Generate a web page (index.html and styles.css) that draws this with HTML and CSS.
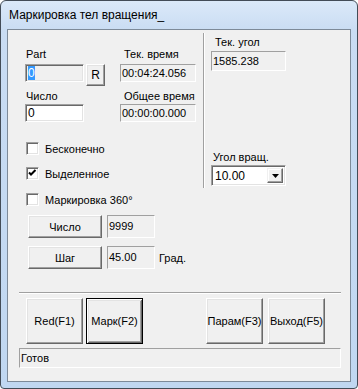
FILE: index.html
```html
<!DOCTYPE html>
<html lang="ru">
<head>
<meta charset="utf-8">
<title>Маркировка тел вращения</title>
<link rel="stylesheet" href="styles.css">
</head>
<body>
<div class="window">
  <div class="titlebar">Маркировка тел вращения_</div>
  <div class="client">
    <div class="top">
      <div class="left">
        <div class="row labels1">
          <span class="lbl col1 pl1">Part</span>
          <span class="lbl pl4">Тек. время</span>
        </div>
        <div class="row fields1">
          <div class="edit sunken readonly part"><span class="sel">0</span></div>
          <div class="btn rbtn">R</div>
          <div class="edit static time">00:04:24.056</div>
        </div>
        <div class="row labels2">
          <span class="lbl col1 pl1">Число</span>
          <span class="lbl pl4">Общее время</span>
        </div>
        <div class="row fields2">
          <div class="edit sunken part">0</div>
          <div class="edit static time time2">00:00:00.000</div>
        </div>
        <div class="cb cb1"><span class="box"></span><span class="cbtext">Бесконечно</span></div>
        <div class="cb cb2"><span class="box"><svg width="9" height="9" viewBox="0 0 9 9"><polyline points="1,3.5 3,5.5 7.5,1" fill="none" stroke="#000" stroke-width="2"/></svg></span><span class="cbtext">Выделенное</span></div>
        <div class="cb cb3"><span class="box"></span><span class="cbtext">Маркировка 360°</span></div>
        <div class="row brow brow1">
          <div class="btn wide">Число</div>
          <div class="edit static num">9999</div>
        </div>
        <div class="row brow brow2">
          <div class="btn wide">Шаг</div>
          <div class="edit static num">45.00</div>
          <span class="unit">Град.</span>
        </div>
      </div>
      <div class="vsep"></div>
      <div class="right">
        <span class="lbl rl1">Тек. угол</span>
        <div class="edit static angle">1585.238</div>
        <span class="lbl rl2">Угол вращ.</span>
        <div class="combo sunken">
          <span class="combotext">10.00</span>
          <span class="dd"><svg width="7" height="4" viewBox="0 0 7 4"><polygon points="0,0 7,0 3.5,4" fill="#000"/></svg></span>
        </div>
      </div>
    </div>
    <div class="hsep"></div>
    <div class="buttons">
      <div class="btn big">Red(F1)</div>
      <div class="btn big default m3">Марк(F2)</div>
      <div class="btn big m63">Парам(F3)</div>
      <div class="btn big m5">Выход(F5)</div>
    </div>
    <div class="status">Готов</div>
  </div>
</div>
</body>
</html>
```
FILE: styles.css
```css
* { box-sizing: border-box; }
html, body { margin: 0; padding: 0; }
body {
  width: 358px; height: 389px; overflow: hidden; background: #fff;
  font-family: "Liberation Sans", Arial, sans-serif; font-size: 11px; color: #000;
}
.window {
  width: 358px; height: 389px;
  border: 1px solid #434c57;
  border-radius: 6px 6px 4px 4px;
  background: linear-gradient(#dbe9f9, #c9dcf3 30px, #c0d7f1);
  display: flex; flex-direction: column; overflow: hidden;
}
.titlebar {
  height: 28px; flex: none; padding-left: 8px;
  font-size: 12px; line-height: 29px; white-space: nowrap;
}
.client {
  flex: none; margin: 0 6px; width: 344px; height: 353px;
  border: 1px solid #7d8a99; background: #f0f0f0;
}
.top { display: flex; align-items: flex-start; }
.left { width: 195px; padding-left: 17px; flex: none; }
.vsep {
  width: 2px; height: 155px; margin-top: 3px; flex: none;
  border-left: 1px solid #a0a0a0; border-right: 1px solid #fff;
}
.right { padding-left: 6px; display: flex; flex-direction: column; align-items: flex-start; }

.row { display: flex; align-items: flex-start; }
.lbl { display: block; height: 13px; line-height: 13px; white-space: nowrap; }
.col1 { width: 95px; }
.pl1 { padding-left: 1px; }
.pl4 { padding-left: 4px; }
.labels1 { margin-top: 18px; }
.fields1 { margin-top: 3px; }
.labels2 { margin-top: 4px; }
.fields2 { margin-top: 1px; }

.edit { white-space: nowrap; overflow: hidden; background: #fff; }
.sunken {
  border: 1px solid; border-color: #a0a0a0 #fff #fff #a0a0a0;
  box-shadow: inset 1px 1px #696969, inset -1px -1px #e3e3e3;
}
.static {
  border: 1px solid; border-color: #a0a0a0 #fff #fff #a0a0a0;
  background: #f0f0f0; padding-left: 1px; line-height: 16px;
}
.part { width: 59px; height: 18px; padding-left: 2px; line-height: 16px; font-size: 12px; }
.readonly { background: #f0f0f0; }
.sel { background: #3399ff; color: #fff; display: inline-block; line-height: 14px; }
.time { width: 76px; height: 18px; margin-left: 15px; }
.time2 { margin-left: 36px; }

.btn {
  display: flex; align-items: center; justify-content: center;
  background: #f0f0f0; white-space: nowrap;
  border: 1px solid; border-color: #fff #696969 #696969 #fff;
  box-shadow: inset -1px -1px #a0a0a0, inset 1px 1px #e3e3e3;
}
.rbtn { width: 19px; height: 22px; margin-left: 2px; font-size: 12px; }

.cb { display: flex; align-items: center; height: 13px; margin-left: 1px; }
.cb1 { margin-top: 20px; }
.cb2 { margin-top: 12px; }
.cb3 { margin-top: 13px; }
.box {
  width: 13px; height: 13px; flex: none; background: #fff;
  border: 1px solid; border-color: #a0a0a0 #fff #fff #a0a0a0;
  box-shadow: inset 1px 1px #696969, inset -1px -1px #e3e3e3;
  display: flex; align-items: center; justify-content: center;
}
.box svg { display: block; }
.cbtext { margin-left: 6px; white-space: nowrap; }

.brow1 { margin-top: 9px; }
.brow2 { margin-top: 8px; }
.brow { align-items: center; }
.wide { width: 74px; height: 23px; margin-left: 3px; }
.num { width: 48px; height: 23px; margin-left: 5px; line-height: 21px; }
.unit { margin-left: 4px; white-space: nowrap; }

.rl1 { margin-top: 6px; margin-left: 4px; }
.angle { width: 75px; height: 20px; margin-top: 2px; line-height: 18px; }
.rl2 { margin-top: 80px; margin-left: 2px; }
.combo {
  width: 75px; height: 21px; margin-top: 1px; background: #fff;
  display: flex; align-items: stretch; padding: 2px 2px 2px 3px;
}
.combotext { flex: 1; line-height: 17px; font-size: 12px; }
.dd {
  width: 16px; flex: none; background: #f0f0f0;
  border: 1px solid; border-color: #f0f0f0 #696969 #696969 #f0f0f0;
  box-shadow: inset -1px -1px #a0a0a0, inset 1px 1px #fff;
  display: flex; align-items: center; justify-content: center;
}
.dd svg { display: block; }

.hsep {
  width: 322px; height: 2px; margin: 23px 0 0 11px;
  border-top: 1px solid #a0a0a0; border-bottom: 1px solid #fff;
}
.buttons { display: flex; margin-top: 4px; padding-left: 18px; }
.big { width: 57px; height: 46px; }
.default {
  border: 1px solid #000;
  box-shadow: inset 1px 1px #fff, inset -1px -1px #696969, inset 2px 2px #e3e3e3, inset -2px -2px #a0a0a0;
}
.m3 { margin-left: 3px; }
.m63 { margin-left: 63px; }
.m5 { margin-left: 5px; }
.status {
  width: 322px; height: 20px; margin: 4px 0 0 11px;
  border: 1px solid; border-color: #a0a0a0 #fff #fff #a0a0a0;
  padding-left: 1px; line-height: 18px; white-space: nowrap;
}
```
